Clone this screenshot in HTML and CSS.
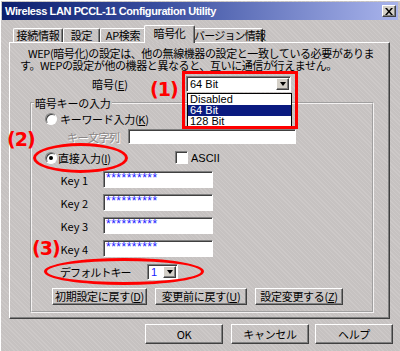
FILE: index.html
```html
<!DOCTYPE html>
<html lang="ja">
<head>
    <meta charset="UTF-8">
    <title>Wireless LAN PCCL-11 Configuration Utility</title>
    <link rel="stylesheet" href="styles.css">
</head>
<body>

    <div class="window">
        <div class="titlebar">
            <span class="title">Wireless LAN PCCL-11 Configuration Utility</span>
            <span class="close-btn">
                <svg width="8" height="7" viewBox="0 0 8 7"><path d="M0 0h2l2 2.5L6 0h2L5 3.5 8 7H6L4 4.5 2 7H0l3-3.5z" fill="#000"/></svg>
            </span>
        </div>

        <div class="tabs">
            <div class="tab tab-conn">接続情報</div>
            <div class="tab tab-set">設定</div>
            <div class="tab tab-ap">AP検索</div>
            <div class="tab tab-enc active">暗号化</div>
            <div class="tab tab-ver">バージョン情報</div>
        </div>

        <div class="panel">
            <div class="desc">
                <div class="desc-line first">WEP(暗号化)の設定は、他の無線機器の設定と一致している必要がありま</div>
                <div class="desc-line">す。WEPの設定が他の機器と異なると、互いに通信が行えません。</div>
            </div>

            <div class="enc-row">
                <span class="enc-label">暗号(<u>E</u>)</span>
                <div class="combo enc-combo">
                    <span class="combo-text">64 Bit</span>
                    <span class="drop-btn"><span class="arrow"></span></span>
                </div>
            </div>

            <fieldset class="group">
                <legend>暗号キーの入力</legend>

                <div class="row row-keyword">
                    <span class="radio"></span>
                    <span class="radio-label">キーワード入力(<u>K</u>)</span>
                </div>

                <div class="row row-string">
                    <span class="string-label">キー文字列</span>
                    <span class="field string-field"></span>
                </div>

                <div class="row row-direct">
                    <span class="radio checked"></span>
                    <span class="radio-label direct-label">直接入力(<u>I</u>)</span>
                    <span class="checkbox"></span>
                    <span class="check-label">ASCII</span>
                </div>

                <div class="row key-row first">
                    <span class="key-label">Key 1</span>
                    <span class="field key-field">**********</span>
                </div>
                <div class="row key-row">
                    <span class="key-label">Key 2</span>
                    <span class="field key-field">**********</span>
                </div>
                <div class="row key-row">
                    <span class="key-label">Key 3</span>
                    <span class="field key-field">**********</span>
                </div>
                <div class="row key-row">
                    <span class="key-label">Key 4</span>
                    <span class="field key-field">**********</span>
                </div>

                <div class="row row-default">
                    <span class="default-label">デフォルトキー</span>
                    <div class="combo default-combo">
                        <span class="combo-text blue">1</span>
                        <span class="drop-btn"><span class="arrow"></span></span>
                    </div>
                </div>

                <div class="row row-buttons">
                    <button class="btn btn-init">初期設定に戻す(<u>D</u>)</button>
                    <button class="btn btn-undo">変更前に戻す(<u>U</u>)</button>
                    <button class="btn btn-apply">設定変更する(<u>Z</u>)</button>
                </div>
            </fieldset>
        </div>

        <div class="footer">
            <button class="btn btn-ok">OK</button>
            <button class="btn btn-cancel">キャンセル</button>
            <button class="btn btn-help">ヘルプ</button>
        </div>

        <!-- open dropdown list -->
        <div class="dropdown-list">
            <div class="item">Disabled</div>
            <div class="item selected">64 Bit</div>
            <div class="item">128 Bit</div>
        </div>

        <!-- red annotations -->
        <div class="mark mark-1">(1)</div>
        <div class="mark mark-2">(2)</div>
        <div class="mark mark-3">(3)</div>
        <div class="red-box"></div>
        <div class="red-ellipse ellipse-direct"></div>
        <div class="red-ellipse ellipse-default"></div>
    </div>

</body>
</html>
```

FILE: styles.css
```css
body {
    margin: 0;
    padding: 0;
    font-family: "Noto Sans CJK JP", "Liberation Sans", sans-serif;
    font-size: 11px;
    color: #000;
}

.window {
    position: relative;
    width: 400px;
    height: 351px;
    box-sizing: border-box;
    padding: 2px;
    background-color: #c9c5c4;
    background-image: repeating-linear-gradient(45deg, #cdc9c8 0 1px, #c6c2c1 1px 3px);
    border-left: 1px solid #fff;
    border-top: 1px solid #fff;
    overflow: hidden;
}

.titlebar {
    height: 18px;
    margin: -1px 0 0 -1px;
    display: flex;
    align-items: center;
    justify-content: space-between;
    padding: 0 2px 0 3px;
    background: linear-gradient(to right, #0c1f6e 0%, #3a4fa0 40%, #a9b4ec 100%);
}

.title {
    font-family: "Liberation Sans", sans-serif;
    font-weight: bold;
    font-size: 11px;
    color: #fff;
    letter-spacing: -0.4px;
}

.close-btn {
    width: 14px;
    height: 12px;
    box-sizing: border-box;
    display: flex;
    align-items: center;
    justify-content: center;
    background: #d4d0c8;
    border: 1px solid;
    border-color: #fff #404040 #404040 #fff;
    box-shadow: inset -1px -1px #808080;
}

/* tabs */
.tabs {
    display: flex;
    align-items: flex-end;
    height: 17px;
    margin: 5px 0 0 10px;
}

.tab {
    height: 14px;
    box-sizing: border-box;
    text-align: center;
    line-height: 13px;
    white-space: nowrap;
    letter-spacing: -0.3px;
    border: 1px solid;
    border-bottom: none;
    border-color: #fff #404040 #fff #fff;
    border-radius: 2px 2px 0 0;
    box-shadow: inset -1px 0 #808080;
}

.tab-conn { width: 50px; }
.tab-set { width: 37px; }
.tab-ap { width: 46px; }
.tab-enc { width: 47px; }
.tab-ver { width: 70px; letter-spacing: -0.8px; }

.tab.active {
    position: relative;
    z-index: 1;
    height: 18px;
    width: 51px;
    margin: 0 -2px -1px;
    line-height: 15px;
    background-color: #c9c5c4;
    background-image: repeating-linear-gradient(45deg, #cdc9c8 0 1px, #c6c2c1 1px 3px);
}

/* panel */
.panel {
    height: 277px;
    box-sizing: border-box;
    margin: 0 8px 0 6px;
    border: 1px solid;
    border-color: #fff #404040 #404040 #fff;
    box-shadow: inset -1px -1px #808080;
}

.desc {
    margin: 4px 0 0 10px;
    letter-spacing: -0.4px;
    white-space: nowrap;
}

.desc-line {
    height: 12px;
    line-height: 12px;
}

.desc-line.first {
    padding-left: 8px;
}

.enc-row {
    display: flex;
    align-items: center;
    height: 15px;
    margin-top: 5px;
}

.enc-label {
    margin-left: 82px;
    width: 94px;
}

.combo {
    display: flex;
    align-items: center;
    justify-content: space-between;
    box-sizing: border-box;
    background: #fff;
    border: 1px solid;
    border-color: #808080 #fff #fff #808080;
    box-shadow: inset 1px 1px #404040;
    padding: 1px 1px 1px 3px;
}

.enc-combo {
    width: 105px;
    height: 16px;
}

.combo-text {
    font-family: "Liberation Sans", sans-serif;
    font-size: 11px;
}

.blue {
    color: #1a1aff;
}

.drop-btn {
    width: 13px;
    height: 12px;
    box-sizing: border-box;
    display: flex;
    align-items: center;
    justify-content: center;
    background: #d4d0c8;
    border: 1px solid;
    border-color: #fff #404040 #404040 #fff;
    box-shadow: inset -1px -1px #808080;
}

.arrow {
    width: 0;
    height: 0;
    border-left: 3px solid transparent;
    border-right: 3px solid transparent;
    border-top: 4px solid #000;
}

/* group box */
.group {
    width: 344px;
    box-sizing: border-box;
    margin: 6px 0 0 20px;
    padding: 0 0 6px 0;
    border: 2px groove #f4f2f2;
}

.group legend {
    margin-left: 2px;
    padding: 0 1px;
    line-height: 12px;
    letter-spacing: -0.2px;
}

.row {
    display: flex;
    align-items: center;
}

.row-keyword {
    height: 12px;
    margin-top: 4px;
}

.radio {
    width: 12px;
    height: 12px;
    box-sizing: border-box;
    border-radius: 50%;
    background: #fff;
    border: 1px solid;
    border-color: #808080 #fff #fff #808080;
    box-shadow: inset 1px 1px #404040;
    margin-left: 13px;
    display: flex;
    align-items: center;
    justify-content: center;
}

.radio.checked::after {
    content: "";
    width: 4px;
    height: 4px;
    border-radius: 50%;
    background: #000;
}

.radio-label {
    margin-left: 3px;
    letter-spacing: -0.3px;
}

.row-string {
    height: 15px;
    margin-top: 4px;
}

.string-label {
    width: 61px;
    margin-left: 35px;
    color: #8a8686;
    text-shadow: 1px 1px 0 #fff;
    letter-spacing: -0.5px;
}

.field {
    display: block;
    box-sizing: border-box;
    background: #fff;
    border: 1px solid;
    border-color: #808080 #fff #fff #808080;
    box-shadow: inset 1px 1px #404040;
}

.string-field {
    width: 168px;
    height: 15px;
}

.row-direct {
    height: 13px;
    margin-top: 7px;
}

.direct-label {
    width: 117px;
    margin-left: 1px;
}

.checkbox {
    width: 13px;
    height: 13px;
    box-sizing: border-box;
    background: #fff;
    border: 1px solid;
    border-color: #808080 #fff #fff #808080;
    box-shadow: inset 1px 1px #404040;
}

.check-label {
    margin-left: 3px;
    font-family: "Liberation Sans", sans-serif;
    font-size: 11px;
}

.key-row {
    height: 17px;
    margin-top: 6px;
}

.key-row.first {
    margin-top: 7px;
}

.key-label {
    width: 56px;
    text-align: right;
}

.key-field {
    width: 110px;
    height: 17px;
    margin-left: 15px;
    padding: 0 0 0 2px;
    color: #1a1aff;
    font-family: "Liberation Sans", sans-serif;
    font-size: 12px;
    line-height: 12px;
    letter-spacing: 0.5px;
}

.row-default {
    height: 16px;
    margin-top: 7px;
}

.default-label {
    width: 87px;
    margin-left: 28px;
    letter-spacing: -0.9px;
}

.default-combo {
    width: 31px;
    height: 16px;
}

.row-buttons {
    height: 17px;
    margin-top: 8px;
}

.btn {
    box-sizing: border-box;
    height: 17px;
    padding: 0;
    font-family: "Noto Sans CJK JP", "Liberation Sans", sans-serif;
    font-size: 11px;
    line-height: 13px;
    color: #000;
    background: transparent;
    border: 1px solid;
    border-color: #fff #404040 #404040 #fff;
    box-shadow: inset -1px -1px #808080;
    letter-spacing: -0.3px;
}

.btn-init {
    width: 95px;
    margin-left: 20px;
}

.btn-undo {
    width: 92px;
    margin-left: 8px;
}

.btn-apply {
    width: 88px;
    margin-left: 8px;
}

/* footer buttons */
.footer {
    display: flex;
    justify-content: flex-end;
    margin: 5px 5px 0 0;
}

.footer .btn {
    height: 20px;
    width: 78px;
}

.btn-cancel {
    margin-left: 8px;
}

.btn-help {
    margin-left: 6px;
}

/* open list of the encryption combo */
.dropdown-list {
    position: absolute;
    left: 186px;
    top: 92px;
    width: 105px;
    height: 34px;
    box-sizing: border-box;
    background: #fff;
    border: 1px solid #000;
    font-family: "Liberation Sans", sans-serif;
    font-size: 11px;
}

.dropdown-list .item {
    height: 11px;
    line-height: 11px;
    padding-left: 2px;
}

.dropdown-list .item.selected {
    background: #0a1a80;
    color: #fff;
}

/* red annotations */
.mark {
    position: absolute;
    color: #f00;
    font-family: "DejaVu Sans", sans-serif;
    font-weight: bold;
    font-size: 19px;
    line-height: 22px;
    letter-spacing: -1px;
}

.mark-1 { left: 149px; top: 77px; }
.mark-2 { left: 6px; top: 127px; }
.mark-3 { left: 31px; top: 236px; }

.red-box {
    position: absolute;
    left: 181px;
    top: 70px;
    width: 116px;
    height: 58px;
    box-sizing: border-box;
    border: 3px solid #f00;
}

.red-ellipse {
    position: absolute;
    box-sizing: border-box;
    border: 3px solid #f00;
    border-radius: 50%;
}

.ellipse-direct {
    left: 32px;
    top: 142px;
    width: 95px;
    height: 30px;
}

.ellipse-default {
    left: 43px;
    top: 257px;
    width: 160px;
    height: 27px;
}
```
